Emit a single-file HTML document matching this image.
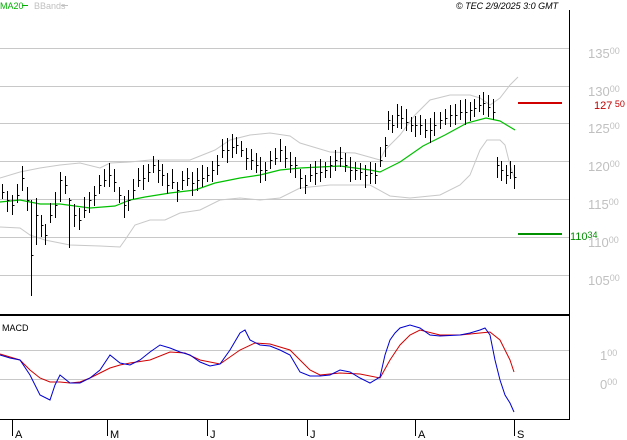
<!DOCTYPE html>
<html><head><style>
body{margin:0;background:#fff;}
svg{display:block;font-family:"Liberation Sans",sans-serif;}
</style></head><body>
<svg width="627" height="440" viewBox="0 0 627 440" xmlns="http://www.w3.org/2000/svg">
<rect width="627" height="440" fill="#fff"/>
<g stroke="#c8c8c8" stroke-width="1">
<line x1="0" y1="48.5" x2="569" y2="48.5"/><line x1="0" y1="86.5" x2="569" y2="86.5"/>
<line x1="0" y1="123.5" x2="569" y2="123.5"/><line x1="0" y1="161.5" x2="569" y2="161.5"/>
<line x1="0" y1="199.5" x2="569" y2="199.5"/><line x1="0" y1="237.5" x2="569" y2="237.5"/>
<line x1="0" y1="275.5" x2="569" y2="275.5"/>
<line x1="0" y1="350.5" x2="569" y2="350.5"/><line x1="0" y1="379.5" x2="569" y2="379.5"/>
</g>
<g stroke="#000">
<line x1="569.5" y1="10" x2="569.5" y2="419"/>
<line x1="0" y1="315" x2="570" y2="315" stroke-width="2"/>
<line x1="0" y1="419.5" x2="570" y2="419.5"/>
<line x1="12.5" y1="419" x2="12.5" y2="436"/><line x1="107.5" y1="419" x2="107.5" y2="436"/>
<line x1="207.5" y1="419" x2="207.5" y2="436"/><line x1="307.5" y1="419" x2="307.5" y2="436"/>
<line x1="415.5" y1="419" x2="415.5" y2="436"/><line x1="514.5" y1="419" x2="514.5" y2="436"/>
</g>
<g font-size="11" fill="#000"><text x="15" y="438">A</text><text x="110" y="438">M</text><text x="210" y="438">J</text><text x="310" y="438">J</text><text x="418" y="438">A</text><text x="517" y="438">S</text></g>
<polyline fill="none" stroke="#c8c8c8" points="0,178 20,172 40,168 60,165 80,163 100,168 110,163 130,162 150,160 170,160 190,160 215,150 230,140 250,135 270,133 290,136 300,143 330,152 355,153 380,160 385,150 400,135 415,115 430,100 450,95 470,95 480,98 490,105 500,98 510,85 518,77"/>
<polyline fill="none" stroke="#c8c8c8" points="0,227 20,228 30,235 45,240 70,245 100,246 120,247 125,240 135,225 150,220 165,220 180,213 200,210 220,200 240,198 260,200 280,198 300,188 330,185 350,185 370,185 390,196 410,198 440,195 460,185 470,175 480,150 487,140 500,140 505,145 510,165 515,180"/>
<polyline fill="none" stroke="#00c000" stroke-width="1.2" points="0,202 20,200 40,204 60,204 90,208 115,206 130,200 145,197 170,193 195,190 215,183 240,178 260,175 280,170 300,168 340,166 370,170 380,172 400,162 423,146 445,135 467,123 486,118 500,121 515,130"/>
<g id="bars" stroke="#000" stroke-width="1"></g>
<polyline fill="none" stroke="#d00000" points="0,354 20,360 30,370 40,378 50,382 60,382 70,383 80,382 90,378 100,373 110,368 120,365 130,363 150,360 170,352 185,353 200,360 220,364 240,350 255,343 270,344 290,350 300,360 310,370 320,375 340,373 360,374 380,378 390,360 400,345 410,335 420,330 440,335 460,335 480,333 490,332 500,340 505,350 510,360 514,372"/>
<polyline fill="none" stroke="#0000d0" points="0,355 10,358 20,360 30,375 40,395 50,400 55,385 60,375 70,383 80,383 90,378 100,370 110,355 120,363 130,365 140,360 150,352 160,345 170,348 180,352 190,355 200,362 210,366 220,364 230,350 240,333 245,330 250,340 260,345 270,346 280,350 290,355 300,372 310,376 320,376 330,375 340,370 350,372 360,378 370,383 380,377 385,355 390,340 395,333 400,328 410,325 420,328 430,335 440,336 460,335 470,333 480,330 485,328 490,335 495,360 500,380 505,395 510,403 514,412"/>
<g fill="#c0c0c0" font-size="13"><text x="588" y="58">135<tspan font-size="9" dy="-4">00</tspan></text>
<text x="588" y="96">130<tspan font-size="9" dy="-4">00</tspan></text>
<text x="588" y="133">125<tspan font-size="9" dy="-4">00</tspan></text>
<text x="588" y="171">120<tspan font-size="9" dy="-4">00</tspan></text>
<text x="588" y="209">115<tspan font-size="9" dy="-4">00</tspan></text>
<text x="588" y="247">110<tspan font-size="9" dy="-4">00</tspan></text>
<text x="588" y="285">105<tspan font-size="9" dy="-4">00</tspan></text>
<text x="600" y="360">1<tspan font-size="9" dy="-4">00</tspan></text>
<text x="600" y="389">0<tspan font-size="9" dy="-4">00</tspan></text></g>
<line x1="518" y1="103" x2="562" y2="103" stroke="#d00000" stroke-width="2"/>
<line x1="518" y1="234" x2="562" y2="234" stroke="#009000" stroke-width="2"/>
<text x="594" y="109" fill="#c00000" font-size="11">127<tspan font-size="9" dy="-2"> 50</tspan></text>
<text x="570" y="240" fill="#009000" font-size="11">110<tspan font-size="9" dy="-2">34</tspan></text>
<text x="0" y="9" fill="#00b000" font-size="9">MA20</text><line x1="22" y1="5.5" x2="28" y2="5.5" stroke="#00b000"/>
<text x="34" y="9" fill="#c0c0c0" font-size="9">BBands</text><line x1="61" y1="5.5" x2="68" y2="5.5" stroke="#c0c0c0"/>
<text x="456" y="9" fill="#000" font-size="9" font-style="italic">© TEC 2/9/2025 3:0 GMT</text>
<text x="2" y="331" fill="#000" font-size="9">MACD</text>
</svg>
<script>
var d=[[2,192],[7,200],[12,205],[17,195],[22,178],[27,200],[31,255],[36,215],[41,225],[45,235],[50,215],[55,205],[60,180],[65,185],[69,200],[74,215],[79,220],[84,210],[89,200],[94,195],[99,185],[104,180],[109,175],[114,182],[119,195],[124,205],[128,200],[133,190],[138,180],[143,178],[148,172],[153,165],[158,170],[162,175],[167,185],[172,182],[177,190],[182,180],[187,178],[192,183],[197,180],[202,178],[207,175],[212,170],[217,165],[222,150],[227,150],[232,147],[236,145],[241,150],[246,158],[251,160],[256,165],[260,170],[265,170],[270,160],[275,158],[280,150],[285,158],[290,165],[295,165],[300,178],[305,185],[310,175],[315,173],[320,172],[325,170],[330,165],[335,160],[340,158],[345,165],[350,170],[355,170],[360,172],[365,175],[370,173],[375,175],[380,160],[385,145],[388,120],[392,125],[397,115],[401,118],[406,122],[411,125],[415,125],[420,125],[425,130],[430,130],[434,125],[440,120],[445,118],[450,115],[455,115],[460,112],[465,112],[470,110],[474,108],[479,105],[483,103],[488,107],[493,112],[497,165],[501,170],[506,175],[510,172],[514,177]];
var g=document.getElementById('bars'),s='';
var ex={31:[200,296],36:[198,245],69:[198,248],60:[172,202]};
d.forEach(function(p,i){var x=p[0]+.5,c=p[1],h=c-8-(i*7%6),l=c+7+(i*5%7);if(ex[p[0]]){h=ex[p[0]][0];l=ex[p[0]][1];}
s+='<line x1="'+x+'" y1="'+h+'" x2="'+x+'" y2="'+l+'"/><line x1="'+x+'" y1="'+(c+.5)+'" x2="'+(x+2)+'" y2="'+(c+.5)+'"/>';});
g.innerHTML=s;
</script>
</body></html>
